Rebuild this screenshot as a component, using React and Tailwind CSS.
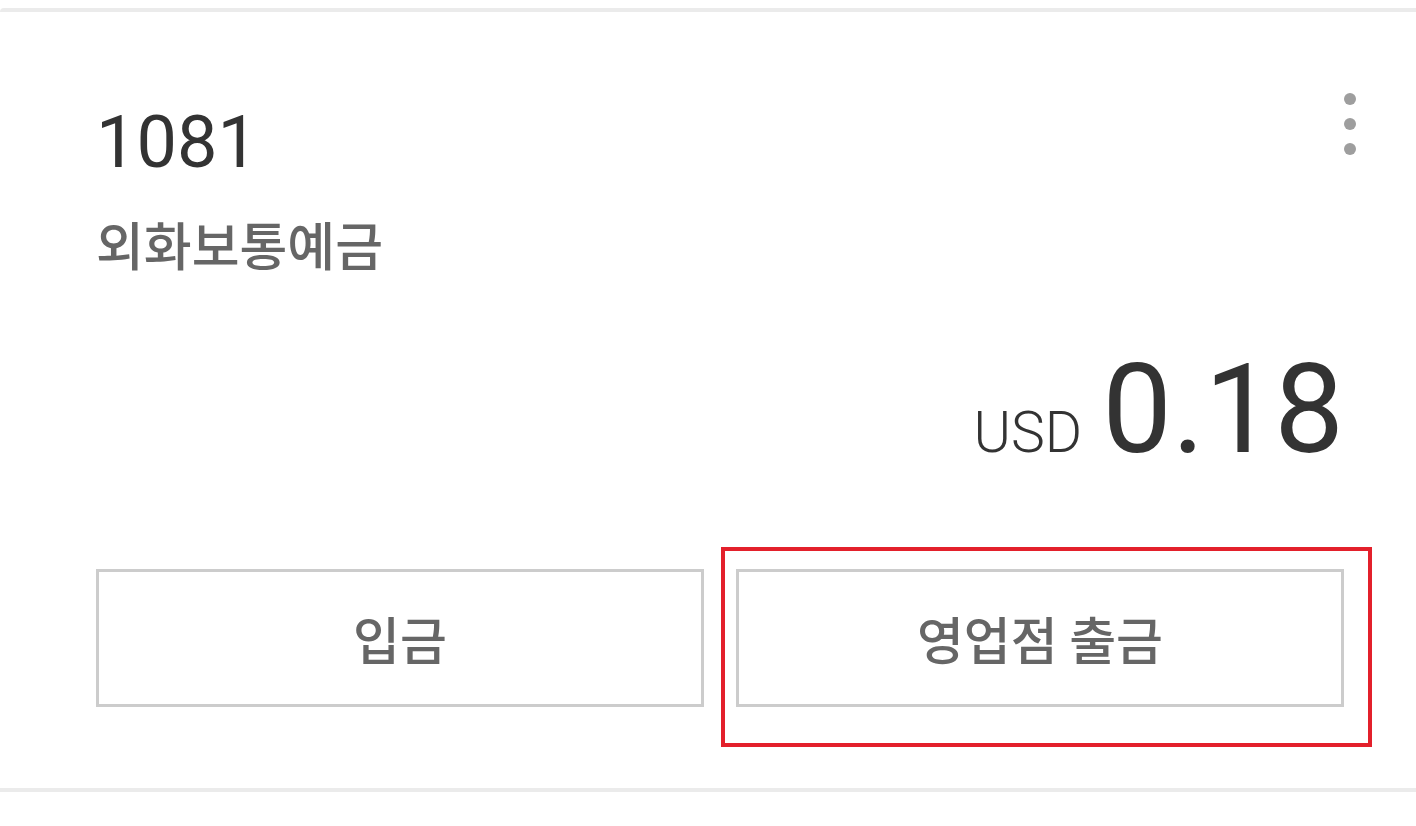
import React from 'react';

const kr = { fontFamily: '"Noto Sans CJK KR", "Noto Sans", sans-serif' };
const ro = { fontFamily: 'Roboto, "Noto Sans CJK KR", sans-serif' };

const MoreDots = () => (
  <svg width="12" height="62" viewBox="0 0 12 62" className="mr-[-12px] mt-[-14px]">
    <circle cx="6" cy="6" r="6" fill="#9e9e9e" />
    <circle cx="6" cy="31" r="6" fill="#9e9e9e" />
    <circle cx="6" cy="56" r="6" fill="#9e9e9e" />
  </svg>
);

const ActionButton = ({ label, highlighted }) => (
  <div className="relative flex-1">
    <button
      className="w-full h-[138px] border-[3px] border-[#cccccc] bg-white text-[51px] leading-none font-medium text-[#666666]"
      style={kr}
    >
      {label}
    </button>
    {highlighted && (
      <div className="absolute left-[-15px] top-[-22px] w-[651px] h-[200px] border-4 border-[#e3202b] pointer-events-none" />
    )}
  </div>
);

export default function App() {
  return (
    <div className="w-[1416px] h-[826px] bg-white pt-[8px]">
      <div className="h-[4px] bg-[#ebebeb] rounded-tl-sm" />
      <div className="h-[776px] pl-[96px] pr-[72px] pt-[95px]">
        <div className="flex justify-between items-start">
          <div>
            <div className="text-[72px] leading-[72px] text-[#333333]" style={ro}>1081</div>
            <div className="mt-[39px] text-[52px] leading-[52px] font-medium text-[#666666]" style={kr}>
              외화보통예금
            </div>
          </div>
          <MoreDots />
        </div>
        <div className="mt-[78px] flex justify-end items-baseline gap-[20px] text-[#333333]" style={ro}>
          <span className="text-[57px] leading-none font-light">USD</span>
          <span className="text-[124px] leading-[124px]">0.18</span>
        </div>
        <div className="mt-[97px] flex gap-[32px]">
          <ActionButton label="입금" />
          <ActionButton label="영업점 출금" highlighted />
        </div>
      </div>
      <div className="h-[4px] bg-[#ebebeb]" />
    </div>
  );
}
